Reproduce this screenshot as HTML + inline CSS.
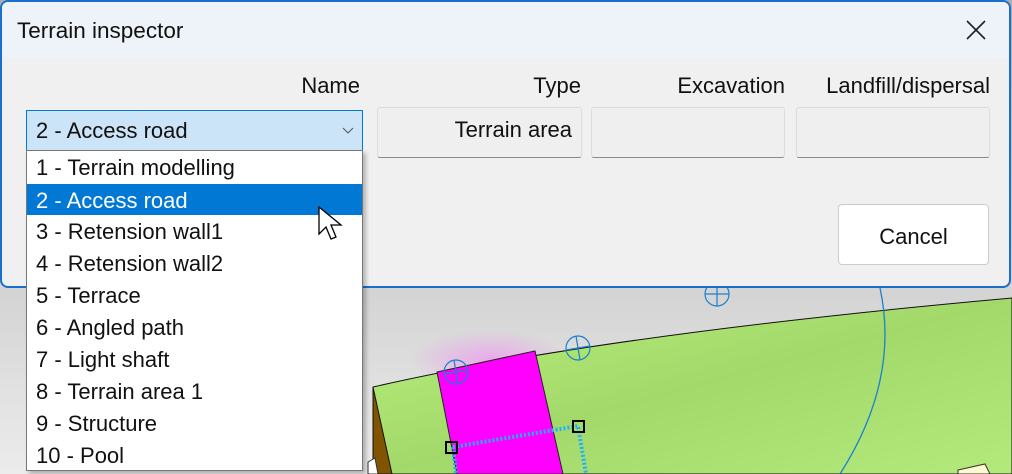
<!DOCTYPE html>
<html><head><meta charset="utf-8"><style>
*{margin:0;padding:0;box-sizing:border-box}
body{width:1012px;height:474px;overflow:hidden;position:relative;font-family:"Liberation Sans",sans-serif;background:#ddd}
.scene{position:absolute;left:0;top:0}
.dlg{position:absolute;left:0;top:0;width:1011px;height:288px;border:2px solid #1a6fcc;border-radius:8px;background:#f0f0f0;overflow:hidden}
.title{height:56px;background:#eef2f9;font-size:22.5px;color:#111;padding:16px 0 0 15px}
.lbl{position:absolute;top:71px;font-size:22px;color:#111;text-align:right;width:200px}
.fld{position:absolute;top:105px;height:51px;background:#efefef;border:1px solid #dcdcdc;border-bottom:1px solid #8a8a8a;border-radius:3px;font-size:22px;text-align:right;padding:9px 9px 0 0;color:#111}
.combo{position:absolute;left:26px;top:110px;width:337px;height:41px;background:#cce4f7;border:1px solid #0078d4;font-size:22px;padding:7px 0 0 9px;color:#111}
.list{position:absolute;left:26px;top:150px;width:337px;height:321px;background:#fff;border:1px solid #777;box-shadow:3px 3px 4px rgba(0,0,0,.25)}
.item{height:32px;font-size:22px;padding:4px 0 0 9px;color:#111;white-space:nowrap}
.sel{background:#0078d4;color:#fff}
.btn{position:absolute;left:836px;top:202px;width:151px;height:61px;background:#fff;border:1px solid #ccc;border-radius:4px;font-size:22px;text-align:center;padding-top:19px;color:#111}
</style></head><body>
<svg class="scene" width="1012" height="474">
<defs><linearGradient id="g" x1="0" y1="0" x2="0" y2="1"><stop offset="0" stop-color="#adadad"/><stop offset="1" stop-color="#ececec"/></linearGradient>
<radialGradient id="pg" cx="0.5" cy="0.5" r="0.5"><stop offset="0" stop-color="#e9a9e9"/><stop offset="1" stop-color="#e9a9e9" stop-opacity="0"/></radialGradient>
<linearGradient id="gr" x1="0" y1="0" x2="1" y2="1"><stop offset="0" stop-color="#b9f07e"/><stop offset="0.5" stop-color="#a3d96a"/><stop offset="1" stop-color="#b4ea7c"/></linearGradient></defs>
<rect width="1012" height="474" fill="url(#g)"/>
<ellipse cx="490" cy="360" rx="80" ry="30" fill="url(#pg)"/>
<path d="M373,387 Q600,335 1012,298 L1012,474 L373,474Z" fill="url(#gr)" stroke="#111" stroke-width="1"/>
<path d="M373,387 L392,474 L373,474Z" fill="#805400" stroke="#111"/>
<path d="M437,372 L535,351 L563,474 L457,474Z" fill="#f0f" stroke="#222"/>
<path d="M880,288 Q900,380 840,474" fill="none" stroke="#1a80d0" stroke-width="1.3"/>
<g fill="none" stroke="#1a80d0" stroke-width="1.2"><circle cx="717" cy="294" r="12"/><line x1="705" y1="294" x2="729" y2="294"/><line x1="717" y1="282" x2="717" y2="306"/>
<circle cx="456" cy="372" r="12"/><line x1="444" y1="374" x2="468" y2="370"/><line x1="454" y1="360" x2="458" y2="384"/>
<circle cx="578" cy="348" r="12"/><line x1="566" y1="350" x2="590" y2="346"/><line x1="576" y1="336" x2="580" y2="360"/></g>
<path d="M453,447 L578,426 L586,474 M453,447 L456,474" fill="none" stroke="#20b0ff" stroke-width="4" stroke-dasharray="2,2"/>
<rect x="446" y="442" width="11" height="11" fill="none" stroke="#000" stroke-width="2"/>
<rect x="573" y="421" width="11" height="11" fill="none" stroke="#000" stroke-width="2"/>
<path d="M958,470 L985,464 L990,474 L958,474Z" fill="#fff8d0" stroke="#333"/>
<path d="M368,462 L375,458 L378,474 L368,474Z" fill="#fff" stroke="#333"/>
</svg>
<div class="dlg">
<div class="title">Terrain inspector</div>
<svg style="position:absolute;right:22px;top:17px" width="22" height="22"><path d="M2,2 L20,20 M20,2 L2,20" stroke="#222" stroke-width="1.6"/></svg>
<div class="lbl" style="left:158px">Name</div>
<div class="lbl" style="left:379px">Type</div>
<div class="lbl" style="left:583px">Excavation</div>
<div class="lbl" style="left:788px">Landfill/dispersal</div>
<div class="fld" style="left:375px;width:205px">Terrain area</div>
<div class="fld" style="left:589px;width:194px"></div>
<div class="fld" style="left:794px;width:194px"></div>
<div class="btn">Cancel</div>
</div>
<div class="combo">2 - Access road<svg style="position:absolute;right:8px;top:16px" width="12" height="8"><path d="M1,1 L6,6 L11,1" fill="none" stroke="#555" stroke-width="1"/></svg></div>
<div class="list">
<div class="item" style="height:33px">1 - Terrain modelling</div>
<div class="item sel" style="height:31px">2 - Access road</div>
<div class="item">3 - Retension wall1</div>
<div class="item">4 - Retension wall2</div>
<div class="item">5 - Terrace</div>
<div class="item">6 - Angled path</div>
<div class="item">7 - Light shaft</div>
<div class="item">8 - Terrain area 1</div>
<div class="item">9 - Structure</div>
<div class="item">10 - Pool</div>
</div>
<svg style="position:absolute;left:318px;top:206px" width="28" height="40"><path d="M1,1 L1,28 L8,21 L13,33 L18,31 L13,19 L23,19Z" fill="#fff" stroke="#000" stroke-width="1.3"/></svg>
</body></html>
